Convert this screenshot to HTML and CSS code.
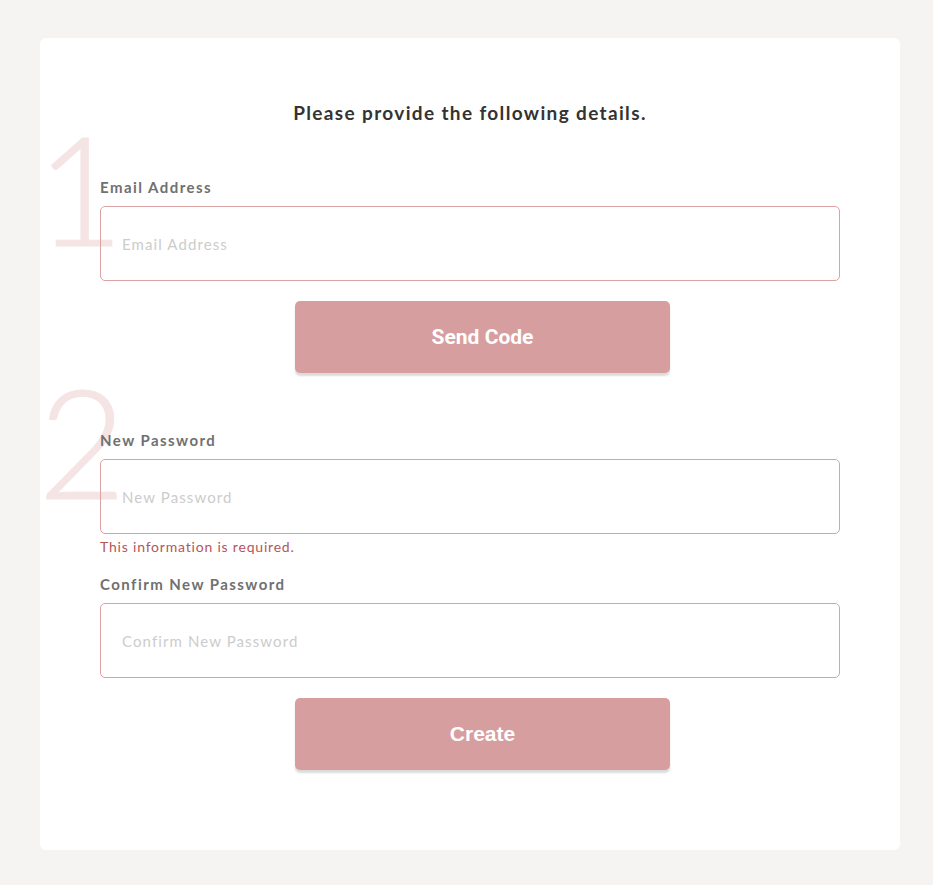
FILE: index.html
```html
<!DOCTYPE html>
<html lang="en">
<head>
<meta charset="utf-8">
<title>Reset Password</title>
<link rel="stylesheet" href="styles.css">
</head>
<body>
<main class="card">
  <h1 class="title">Please provide the following details.</h1>
  <section class="step">
    <span class="step-num">1</span>
    <label class="label" for="email">Email Address</label>
    <input class="field" id="email" type="text" placeholder="Email Address">
    <button class="btn btn-send" type="button">Send Code</button>
  </section>
  <section class="step step-two">
    <span class="step-num step-num-two">2</span>
    <label class="label" for="np">New Password</label>
    <input class="field" id="np" type="password" placeholder="New Password">
    <p class="error">This information is required.</p>
    <label class="label label-gap" for="cp">Confirm New Password</label>
    <input class="field" id="cp" type="password" placeholder="Confirm New Password">
    <button class="btn btn-create" type="button">Create</button>
  </section>
</main>
</body>
</html>
```
FILE: styles.css
```css
html, body {
  margin: 0;
  padding: 0;
  background: #f5f4f2;
}
body {
  font-family: Lato, "Noto Sans", sans-serif;
  padding: 38px 33px 35px 40px;
}
.card {
  background: #ffffff;
  border-radius: 6px;
  padding: 63px 60px 80px 60px;
}
.title {
  margin: 0;
  text-align: center;
  font-size: 19px;
  line-height: 24px;
  font-weight: 700;
  color: #333333;
  letter-spacing: 1.35px;
}
.step {
  position: relative;
  display: flex;
  flex-direction: column;
  margin-top: 52px;
}
.step-two {
  margin-top: 57px;
}
.step-num {
  position: absolute;
  left: -64px;
  top: -66px;
  font-family: Lato, sans-serif;
  font-weight: 300;
  font-size: 152px;
  line-height: 1;
  color: #f5e4e4;
  -webkit-text-stroke: 1px #f5e4e4;
  pointer-events: none;
}
.step-num-two {
  left: -62px;
}
.label {
  position: relative;
  font-size: 15px;
  line-height: 20px;
  font-weight: 700;
  color: #707070;
  letter-spacing: 1.45px;
  margin-bottom: 9px;
}
.label-gap {
  margin-top: 18px;
}
.field {
  position: relative;
  box-sizing: border-box;
  height: 75px;
  width: 100%;
  border: 1px solid #dba2a4;
  border-radius: 5px;
  background: transparent;
  padding: 0 21px;
  font-family: Lato, "Noto Sans", sans-serif;
  font-size: 15px;
  color: #333;
  outline: none;
  letter-spacing: 1.1px;
}
.field::placeholder {
  color: #cccccc;
}
.error {
  margin: 4px 0 0 0;
  font-size: 14px;
  line-height: 18px;
  color: #b5555a;
  letter-spacing: 0.8px;
}
.btn {
  align-self: flex-start;
  margin-left: 195px;
  width: 375px;
  height: 72px;
  margin-top: 20px;
  border: none;
  border-radius: 5px;
  background: #d79e9f;
  color: #ffffff;
  font-size: 21px;
  font-weight: 700;
  box-shadow: 0 3px 2px rgba(0, 0, 0, 0.14);
  cursor: pointer;
}
.btn-send {
  font-family: Roboto, sans-serif;
}
.btn-create {
  font-family: "Liberation Sans", Arial, sans-serif;
}
```
